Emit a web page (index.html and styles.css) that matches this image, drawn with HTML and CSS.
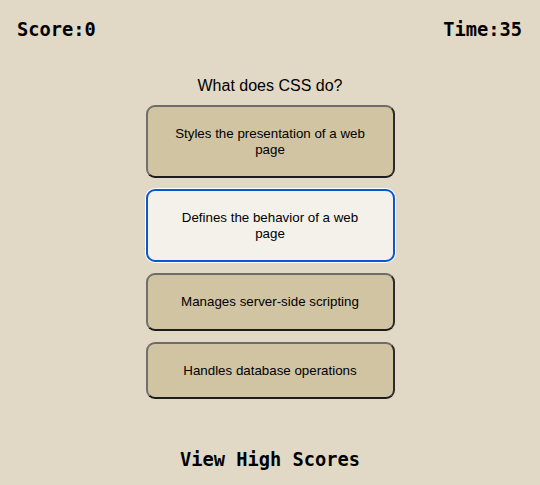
FILE: index.html
```html
<!DOCTYPE html>
<html>
<head>
<meta charset="utf-8">
<link rel="stylesheet" href="styles.css">
</head>
<body>
<header class="topbar">
  <div class="stat">Score:0</div>
  <div class="stat">Time:35</div>
</header>
<main class="quiz">
  <p class="question">What does CSS do?</p>
  <div class="choices">
    <button class="choice">Styles the presentation of a web page</button>
    <button class="choice selected">Defines the behavior of a web page</button>
    <button class="choice">Manages server-side scripting</button>
    <button class="choice">Handles database operations</button>
  </div>
</main>
<footer class="footer">
  <a class="scores">View High Scores</a>
</footer>
</body>
</html>
```
FILE: styles.css
```css
html, body {
  margin: 0;
  padding: 0;
}
body {
  background: #e1d9c5;
  width: 540px;
  height: 485px;
  display: flex;
  flex-direction: column;
  font-family: "Liberation Sans", Arial, sans-serif;
  color: #000;
}
.topbar {
  display: flex;
  justify-content: space-between;
  padding: 19px 18px 0 17px;
}
.stat {
  font-family: "DejaVu Sans Mono", monospace;
  font-weight: bold;
  font-size: 18.7px;
  line-height: 22px;
}
.quiz {
  display: flex;
  flex-direction: column;
  align-items: center;
}
.question {
  margin: 36px 0 0;
  font-size: 16px;
  line-height: 18px;
}
.choices {
  display: flex;
  flex-direction: column;
  gap: 11px;
  margin-top: 10px;
}
.choice {
  width: 249px;
  box-sizing: border-box;
  padding: 19px 22px;
  background: #d0c4a2;
  border: 2px solid;
  border-color: #6e6c68 #2a2a2a #1c1c1c #707070;
  border-radius: 9px;
  font-family: "Liberation Sans", Arial, sans-serif;
  font-size: 13.33px;
  line-height: 15.5px;
  color: #000;
  text-align: center;
}
.choice.selected {
  background: #f3f1ea;
  border-color: #0b57d0;
  box-shadow: 0 0 0 1px #ffffff;
}
.footer {
  margin-top: auto;
  display: flex;
  justify-content: center;
  padding-bottom: 14px;
}
.scores {
  font-family: "DejaVu Sans Mono", monospace;
  font-weight: bold;
  font-size: 18.7px;
  line-height: 22px;
}
```
